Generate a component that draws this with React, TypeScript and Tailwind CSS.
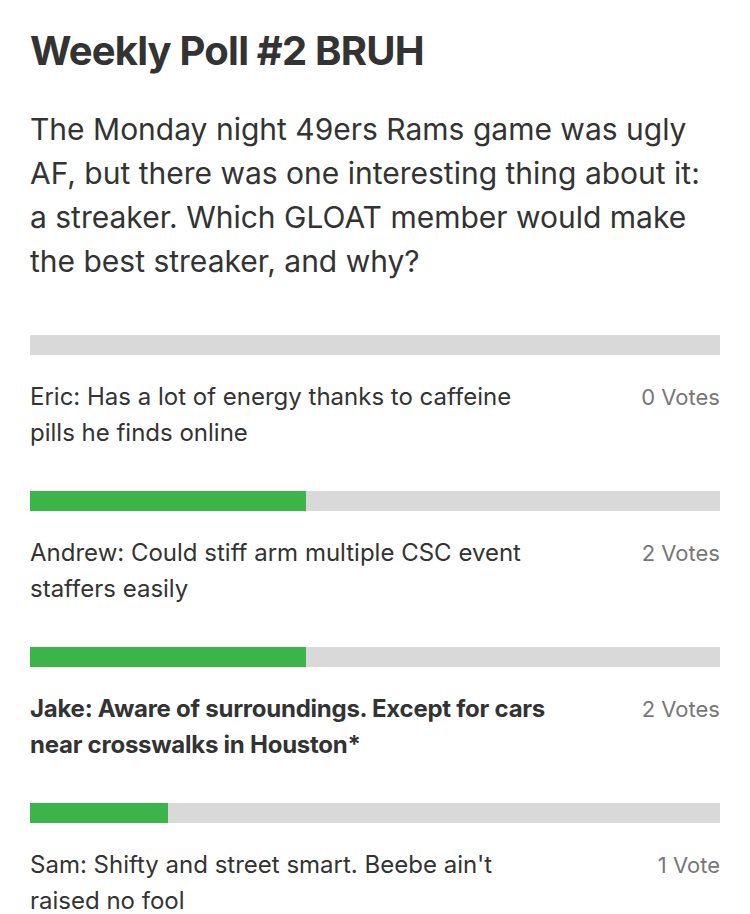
import React from 'react';

type Option = {
  label: string;
  votes: number;
  picked?: boolean;
};

const options: Option[] = [
  { label: 'Eric: Has a lot of energy thanks to caffeine pills he finds online', votes: 0 },
  { label: 'Andrew: Could stiff arm multiple CSC event staffers easily', votes: 2 },
  { label: 'Jake: Aware of surroundings. Except for cars near crosswalks in Houston*', votes: 2, picked: true },
  { label: "Sam: Shifty and street smart. Beebe ain't raised no fool", votes: 1 },
];

const total = options.reduce((sum, o) => sum + o.votes, 0);

const PollOption = ({ option }: { option: Option }) => {
  const pct = total ? (option.votes / total) * 100 : 0;
  return (
    <div className="pb-[40px]">
      <div className="h-[20px] w-full bg-[#d9d9d9]">
        <div className="h-full bg-[#3bb44a]" style={{ width: `${pct}%` }} />
      </div>
      <div className="mt-[24px] flex items-baseline justify-between gap-4 leading-[36px]">
        <p
          className={`max-w-[528px] text-[24px] text-[#333333] ${option.picked ? 'font-bold tracking-[-0.25px]' : ''}`}
        >
          {option.label}
        </p>
        <span className="shrink-0 text-[22px] text-[#777777]">
          {option.votes} {option.votes === 1 ? 'Vote' : 'Votes'}
        </span>
      </div>
    </div>
  );
};

export default function App() {
  return (
    <div className="min-h-screen bg-white px-[30px] pt-[27px] font-['Inter',sans-serif]">
      <h1 className="text-[40px] font-bold leading-[48px] tracking-[-0.8px] text-[#333333]">Weekly Poll #2 BRUH</h1>
      <p className="mt-[32px] text-[30px] leading-[44px] text-[#333333]">
        The Monday night 49ers Rams game was ugly AF, but there was one interesting thing about it: a streaker. Which
        GLOAT member would make the best streaker, and why?
      </p>
      <div className="mt-[52px]">
        {options.map((o) => (
          <PollOption key={o.label} option={o} />
        ))}
      </div>
    </div>
  );
}
